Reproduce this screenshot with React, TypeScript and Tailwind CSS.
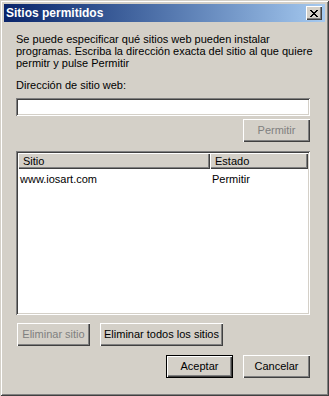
const raised =
  'bg-[#d4d0c8] shadow-[inset_1px_1px_#ffffff,inset_-1px_-1px_#404040,inset_-2px_-2px_#808080]';
const sunken =
  'shadow-[inset_1px_1px_#808080,inset_-1px_-1px_#ffffff,inset_2px_2px_#404040,inset_-2px_-2px_#d4d0c8]';

type ButtonProps = {
  label: string;
  width: string;
  disabled?: boolean;
  isDefault?: boolean;
};

const Button = ({ label, width, disabled, isDefault }: ButtonProps) => (
  <div
    className={`${width} h-[23px] ${isDefault ? 'border border-black' : ''} flex`}
  >
    <div
      className={`flex-1 flex items-center justify-center ${raised} ${
        disabled ? 'text-[#808080]' : 'text-black'
      }`}
    >
      {label}
    </div>
  </div>
);

const CloseIcon = () => (
  <svg width="8" height="7" viewBox="0 0 8 7" shapeRendering="crispEdges">
    <path
      d="M0 0h2v1h-2zM6 0h2v1h-2zM1 1h2v1h-2zM5 1h2v1h-2zM2 2h4v1h-4zM3 3h2v1h-2zM2 4h4v1h-4zM1 5h2v1h-2zM5 5h2v1h-2zM0 6h2v1h-2zM6 6h2v1h-2z"
      fill="#000"
    />
  </svg>
);

export default function App() {
  return (
    <div
      className="w-[329px] h-[396px] bg-[#d4d0c8] p-[4px] flex flex-col text-[11px] text-black shadow-[inset_1px_1px_#d4d0c8,inset_-1px_-1px_#404040,inset_2px_2px_#ffffff,inset_-2px_-2px_#808080]"
      style={{ fontFamily: '"Liberation Sans", Arial, sans-serif' }}
    >
      {/* title bar */}
      <div className="h-[18px] flex items-center justify-between bg-gradient-to-r from-[#0a246a] to-[#a6caf0]">
        <span className="pl-[2px] text-white font-bold text-[12px]">Sitios permitidos</span>
        <div className={`w-[16px] h-[14px] mr-[3px] flex items-center justify-center ${raised}`}>
          <CloseIcon />
        </div>
      </div>

      <div className="flex flex-col pl-[12px] pr-[15px]">
        <p className="mt-[11px] leading-[12px] whitespace-nowrap">
          Se puede especificar qué sitios web pueden instalar
          <br />
          programas. Escriba la dirección exacta del sitio al que quiere
          <br />
          permitr y pulse Permitir
        </p>
        <label className="mt-[10px] leading-[12px]">Dirección de sitio web:</label>
        <div className={`mt-[7px] h-[18px] bg-white ${sunken}`} />

        <div className="mt-[3px] flex justify-end">
          <Button label="Permitir" width="w-[67px]" disabled />
        </div>

        <div className={`mt-[9px] h-[164px] bg-white p-[2px] flex flex-col ${sunken}`}>
          <div className="flex h-[16px]">
            <div className={`w-[192px] pl-[5px] flex items-center ${raised}`}>Sitio</div>
            <div className={`flex-1 pl-[5px] flex items-center ${raised}`}>Estado</div>
          </div>
          <div className="flex h-[15px] mt-[3px] items-center">
            <span className="w-[192px] pl-[2px]">www.iosart.com</span>
            <span className="pl-[2px]">Permitir</span>
          </div>
        </div>

        <div className="mt-[8px] flex gap-[10px] pl-[1px]">
          <Button label="Eliminar sitio" width="w-[73px]" disabled />
          <Button label="Eliminar todos los sitios" width="w-[123px]" />
        </div>

        <div className="mt-[9px] flex justify-end gap-[10px]">
          <Button label="Aceptar" width="w-[67px]" isDefault />
          <Button label="Cancelar" width="w-[67px]" />
        </div>
      </div>
    </div>
  );
}
